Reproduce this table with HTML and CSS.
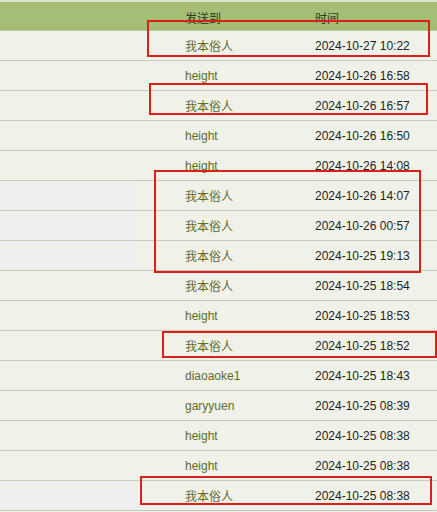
FILE: index.html
```html
<!DOCTYPE html>
<html lang="zh">
<head>
<meta charset="utf-8">
<title>消息列表</title>
<link rel="stylesheet" href="styles.css">
</head>
<body>
<div class="page">
  <div class="strip"></div>
  <div class="row head">
    <div class="c0"></div>
    <div class="c1">发送到</div>
    <div class="c2">时间</div>
  </div>
  <div class="row"><div class="c0"></div><div class="c1">我本俗人</div><div class="c2">2024-10-27 10:22</div></div>
  <div class="row"><div class="c0"></div><div class="c1">height</div><div class="c2">2024-10-26 16:58</div></div>
  <div class="row"><div class="c0"></div><div class="c1">我本俗人</div><div class="c2">2024-10-26 16:57</div></div>
  <div class="row"><div class="c0"></div><div class="c1">height</div><div class="c2">2024-10-26 16:50</div></div>
  <div class="row"><div class="c0"></div><div class="c1">height</div><div class="c2">2024-10-26 14:08</div></div>
  <div class="row"><div class="c0 grey"></div><div class="c1">我本俗人</div><div class="c2">2024-10-26 14:07</div></div>
  <div class="row"><div class="c0 grey"></div><div class="c1">我本俗人</div><div class="c2">2024-10-26 00:57</div></div>
  <div class="row"><div class="c0 grey"></div><div class="c1">我本俗人</div><div class="c2">2024-10-25 19:13</div></div>
  <div class="row"><div class="c0"></div><div class="c1">我本俗人</div><div class="c2">2024-10-25 18:54</div></div>
  <div class="row"><div class="c0"></div><div class="c1">height</div><div class="c2">2024-10-25 18:53</div></div>
  <div class="row"><div class="c0"></div><div class="c1">我本俗人</div><div class="c2">2024-10-25 18:52</div></div>
  <div class="row"><div class="c0"></div><div class="c1">diaoaoke1</div><div class="c2">2024-10-25 18:43</div></div>
  <div class="row"><div class="c0"></div><div class="c1">garyyuen</div><div class="c2">2024-10-25 08:39</div></div>
  <div class="row"><div class="c0"></div><div class="c1">height</div><div class="c2">2024-10-25 08:38</div></div>
  <div class="row"><div class="c0"></div><div class="c1">height</div><div class="c2">2024-10-25 08:38</div></div>
  <div class="row"><div class="c0 grey"></div><div class="c1">我本俗人</div><div class="c2">2024-10-25 08:38</div></div>

  <div class="mark m1"></div>
  <div class="mark m2"></div>
  <div class="mark m3"></div>
  <div class="mark m4"></div>
  <div class="mark m5"></div>
</div>
</body>
</html>
```
FILE: styles.css
```css
html, body {
  margin: 0;
  padding: 0;
  background: #f0f1e9;
}
.page {
  position: relative;
  width: 437px;
  height: 512px;
  overflow: hidden;
  font-family: "Liberation Sans", "Noto Sans CJK SC", sans-serif;
  font-size: 12px;
}
.strip {
  height: 2px;
  background: #dde3d1;
}
.row {
  display: grid;
  grid-template-columns: 185px 130px 1fr;
  height: 29px;
  border-bottom: 1px solid #c7cabb;
  background: #f0f1e9;
}
.row > div {
  display: flex;
  align-items: center;
}
.row.head {
  height: 28px;
  background: #a4be76;
  border-bottom: 1px solid #b9c99c;
}
.row.head > div {
  color: #2e3a1c;
  align-items: flex-start;
  padding-top: 7px;
  box-sizing: border-box;
}
.c0.grey {
  background: linear-gradient(to right, #efefef 138px, #f0f1e9 138px);
}
.c1 {
  color: #5b6d2c;
}
.c2 {
  color: #1e1e1e;
}
.mark {
  position: absolute;
  border: 2px solid #dd1f1a;
  box-sizing: border-box;
}
.m1 { left: 147px; top: 20px; width: 283px; height: 37px; }
.m2 { left: 149px; top: 83px; width: 279px; height: 32px; }
.m3 { left: 154px; top: 170px; width: 267px; height: 103px; }
.m4 { left: 162px; top: 331px; width: 275px; height: 27px; }
.m5 { left: 140px; top: 476px; width: 292px; height: 29px; }
```
